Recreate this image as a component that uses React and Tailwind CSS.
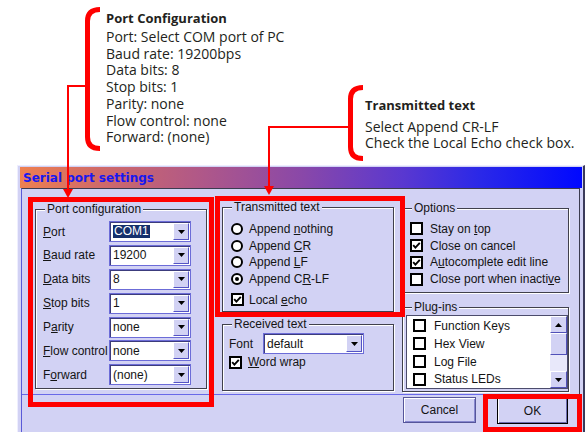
import React from "react";

const LAV = "bg-[#d2d2f4]";

// small black triangle used in combo boxes and scroll buttons
const Tri = ({ up }) => (
  <svg width="7" height="4" viewBox="0 0 7 4">
    <path d={up ? "M0 4 L7 4 L3.5 0 Z" : "M0 0 L7 0 L3.5 4 Z"} fill="#000" />
  </svg>
);

const U = ({ children }) => <span className="underline underline-offset-[1px]">{children}</span>;

const Radio = ({ on }) => (
  <span className="flex h-[12px] w-[12px] shrink-0 items-center justify-center rounded-full border-2 border-black bg-white">
    {on && <span className="h-[4px] w-[4px] rounded-full bg-black" />}
  </span>
);

const Check = ({ on }) => (
  <span className="flex h-[13px] w-[13px] shrink-0 items-center justify-center border-2 border-black bg-white">
    {on && (
      <svg width="9" height="9" viewBox="0 0 9 9">
        <path d="M1.2 4.2 L3.4 6.6 L7.8 1.8" stroke="#000" strokeWidth="1.9" fill="none" />
      </svg>
    )}
  </span>
);

const Combo = ({ value, selected, className = "" }) => (
  <div className={`flex h-[21px] items-stretch border border-[#6c6cd8] bg-white shadow-[inset_1px_1px_0_#3c3c7c] ${className}`}>
    <div className="flex min-w-0 flex-1 items-center pl-[3px]">
      <span className={selected ? "bg-[#15306c] px-px leading-[13px] text-white" : ""}>{value}</span>
    </div>
    <div className={`m-[1px] flex w-[16px] items-center justify-center border border-t-white border-l-white border-r-[#5454c4] border-b-[#5454c4] ${LAV}`}>
      <Tri />
    </div>
  </div>
);

const Group = ({ title, className = "", children }) => (
  <div className={`relative border border-[#40404c] shadow-[1px_1px_0_#fff,inset_1px_1px_0_#fff] ${className}`}>
    <span className={`absolute -top-[8px] left-[9px] px-[2px] leading-[14px] ${LAV}`}>{title}</span>
    {children}
  </div>
);

const ScrollBtn = ({ up }) => (
  <div className={`flex h-[17px] items-center justify-center border border-t-white border-l-white border-r-[#5050b8] border-b-[#5050b8] ${LAV}`}>
    <Tri up={up} />
  </div>
);

const portRows = [
  [<><U>P</U>ort</>, "COM1", true],
  [<><U>B</U>aud rate</>, "19200"],
  [<><U>D</U>ata bits</>, "8"],
  [<><U>S</U>top bits</>, "1"],
  [<>P<U>a</U>rity</>, "none"],
  [<><U>F</U>low control</>, "none"],
  [<>F<U>o</U>rward</>, "(none)"],
];

const App = () => {
  return (
    <div className="relative h-[432px] w-[587px] overflow-hidden bg-white">
      {/* ── Callout texts ───────────────────────────────────────────── */}
      <div className="flex h-[165px] items-start font-['Open_Sans',sans-serif] text-[14px] text-[#231f20]">
        <div className="ml-[84px] mt-[6px] flex w-[263px]">
          <svg width="16" height="146" viewBox="0 0 16 146" className="shrink-0">
            <path d="M16 3.5 Q3.5 3.5 3.5 15 V131 Q3.5 142.5 16 142.5" stroke="#ff0000" strokeWidth="5" fill="none" />
          </svg>
          <div className="ml-[6px] pt-[2px]">
            <div className="text-[13px] font-bold leading-[21px]">Port Configuration</div>
            <div className="leading-[16.7px]">
              <div>Port: Select COM port of PC</div>
              <div>Baud rate: 19200bps</div>
              <div>Data bits: 8</div>
              <div>Stop bits: 1</div>
              <div>Parity: none</div>
              <div>Flow control: none</div>
              <div>Forward: (none)</div>
            </div>
          </div>
        </div>
        <div className="mt-[84px] flex">
          <svg width="16" height="78" viewBox="0 0 16 78" className="shrink-0">
            <path d="M16 3.5 Q3.5 3.5 3.5 15 V63 Q3.5 74.5 16 74.5" stroke="#ff0000" strokeWidth="5" fill="none" />
          </svg>
          <div className="ml-[2px] pt-[10.5px]">
            <div className="text-[13px] font-bold leading-[21px]">Transmitted text</div>
            <div className="mt-[3px] leading-[16px]">
              <div>Select Append CR-LF</div>
              <div>Check the Local Echo check box.</div>
            </div>
          </div>
        </div>
      </div>

      {/* ── Dialog window ───────────────────────────────────────────── */}
      <div className={`ml-[17px] w-[568px] border-l border-t border-r-2 border-l-[#eeeeff] border-t-[#eeeeff] border-r-[#3a3a5a] pl-[2px] pr-[1px] pt-[1px] ${LAV} font-['Liberation_Sans',Arial,sans-serif] text-[12px] text-[#141414]`}>
        <div className="flex h-[21px] items-center bg-[linear-gradient(90deg,#ee8050_0%,#d06a68_14%,#b05888_32%,#8a48a8_50%,#5a38d0_68%,#2a28e8_82%,#0008ff_100%)] pl-[3px] font-['DejaVu_Sans',sans-serif] text-[12px] font-bold text-[#1818f0]">
          Serial port settings
        </div>

        <div className="ml-[1px] w-[559px] border-l border-t border-r border-l-[#5a5ad8] border-t-[#3c3c50] border-r-[#3c3c50]">
          <div className="flex h-[206px] items-start border-b border-b-[#6868e8]">
            {/* Port configuration */}
            <Group title="Port configuration" className="ml-[13px] mt-[20px] w-[172px] pb-[3px] pl-[7px] pt-[11px]">
              <div className="flex flex-col gap-[2.9px]">
                {portRows.map(([label, value, sel], i) => (
                  <div key={i} className="flex h-[21px] items-center">
                    <span className="w-[66px] shrink-0 whitespace-nowrap">{label}</span>
                    <Combo value={value} selected={sel} className="w-[82px]" />
                  </div>
                ))}
              </div>
            </Group>

            {/* Transmitted + Received */}
            <div className="ml-[15px] mt-[18px] flex w-[172px] flex-col">
              <Group title="Transmitted text" className="h-[105px] pl-[8px] pt-[12.6px]">
                {[
                  [<>Append <U>n</U>othing</>, false],
                  [<>Append <U>C</U>R</>, false],
                  [<>Append <U>L</U>F</>, false],
                  [<>Append C<U>R</U>-LF</>, true],
                ].map(([t, on], i) => (
                  <div key={i} className="flex h-[16.7px] items-center gap-[6px]">
                    <Radio on={on} />
                    <span>{t}</span>
                  </div>
                ))}
                <div className="mt-[4px] flex h-[16.7px] items-center gap-[5px]">
                  <Check on />
                  <span>Local <U>e</U>cho</span>
                </div>
              </Group>
              <Group title="Received text" className="mt-[12px] h-[67px] pl-[6px] pt-[8px]">
                <div className="flex h-[21px] items-center">
                  <span className="w-[34px] shrink-0">Font</span>
                  <Combo value="default" className="w-[101px]" />
                </div>
                <div className="flex h-[16px] items-center gap-[6px]">
                  <Check on />
                  <span><U>W</U>ord wrap</span>
                </div>
              </Group>
            </div>

            {/* Options + Plug-ins */}
            <div className="ml-[8px] mt-[19px] flex w-[167px] flex-col">
              <Group title="Options" className="h-[85px] pl-[7px] pt-[11.6px]">
                {[
                  [<>Stay on <U>t</U>op</>, false],
                  [<>Close on cancel</>, true],
                  [<>A<U>u</U>tocomplete edit line</>, true],
                  [<>Close port when inacti<U>v</U>e</>, false],
                ].map(([t, on], i) => (
                  <div key={i} className="flex h-[16.7px] items-center gap-[7px]">
                    <Check on={on} />
                    <span className="whitespace-nowrap">{t}</span>
                  </div>
                ))}
              </Group>
              <Group title="Plug-ins" className="mt-[14px] h-[85px] pl-[3px] pt-[7px]">
                <div className="flex h-[74px] border border-[#4c4c6c] bg-white">
                  <div className="flex-1 pl-[6px] pt-px">
                    {["Function Keys", "Hex View", "Log File", "Status LEDs"].map((t) => (
                      <div key={t} className="flex h-[17.8px] items-center gap-[8px]">
                        <Check />
                        <span>{t}</span>
                      </div>
                    ))}
                  </div>
                  <div className="flex w-[17px] flex-col">
                    <ScrollBtn up />
                    <div className={`h-[22px] border border-t-white border-l-white border-r-[#5050b8] border-b-[#5050b8] ${LAV}`} />
                    <div className="flex-1 bg-[#e8e8fa]" />
                    <ScrollBtn />
                  </div>
                </div>
              </Group>
            </div>
          </div>

          {/* Buttons */}
          <div className="flex h-[60px] justify-end gap-[21px] pr-[11px] pt-[2px]">
            <button className={`h-[26px] w-[73px] border border-[#55559a] shadow-[inset_1px_1px_0_#fff,inset_-1px_-1px_0_#8888d0] ${LAV}`}>
              Cancel
            </button>
            <button className={`h-[27px] w-[71px] border border-black shadow-[inset_1px_1px_0_#fff,inset_-1px_-1px_0_#6a6ab0] ${LAV}`}>
              OK
            </button>
          </div>
        </div>
      </div>

      {/* ── Red highlight overlays ──────────────────────────────────── */}
      <div className="absolute left-[28px] top-[197px] h-[210px] w-[186px] border-[5px] border-[#ff0000]" />
      <div className="absolute left-[215px] top-[196px] h-[121px] w-[190px] border-[5px] border-[#ff0000]" />
      <div className="absolute left-[483px] top-[394px] h-[38px] w-[99px] border-[5px] border-[#ff0000]" />

      <svg className="pointer-events-none absolute left-0 top-0" width="587" height="432">
        <polyline points="86,86 68,86 68,191" stroke="#ff0000" strokeWidth="2" fill="none" />
        <polygon points="63,189 73,189 68,198" fill="#ff0000" />
        <polyline points="348,127 269,127 269,188" stroke="#ff0000" strokeWidth="2" fill="none" />
        <polygon points="264,186 274,186 269,195" fill="#ff0000" />
      </svg>
    </div>
  );
};

export default App;
